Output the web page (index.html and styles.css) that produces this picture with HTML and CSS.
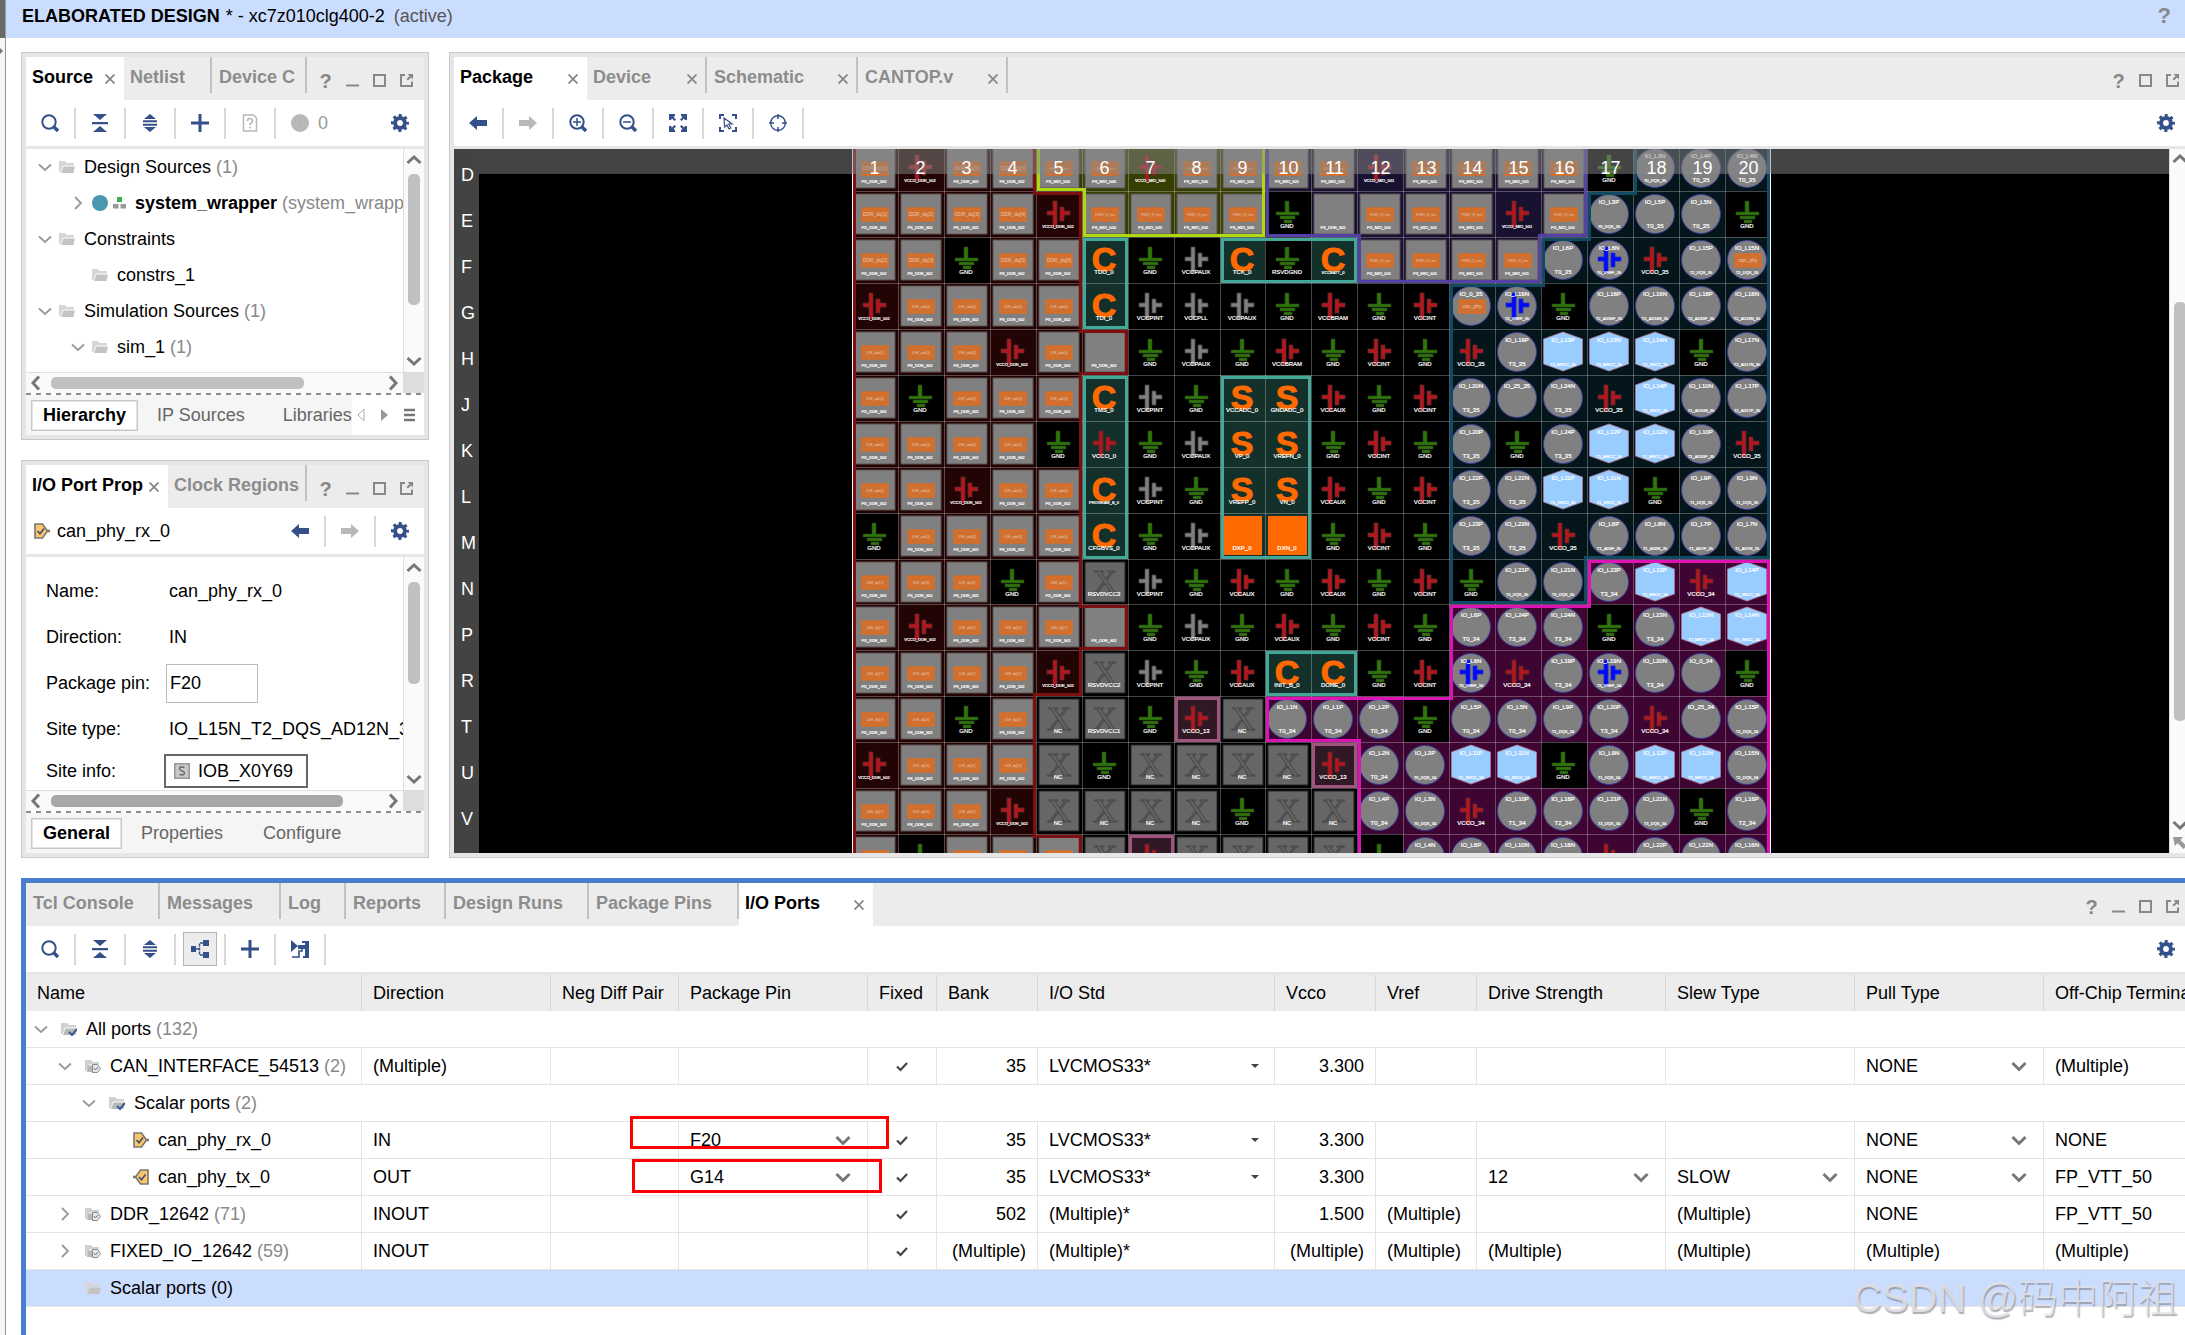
FILE: index.html
```html
<!DOCTYPE html>
<html lang="en">
<head>
<meta charset="utf-8">
<title>Elaborated Design</title>
<link rel="stylesheet" href="styles.css">
</head>
<body>
<svg class="defs" aria-hidden="true">
  <symbol id="search" viewBox="0 0 18 18"><circle cx="8" cy="8" r="6.7" fill="none" stroke="currentColor" stroke-width="2"/><path d="M13 13l4 4" stroke="currentColor" stroke-width="3.4"/></symbol>
  <symbol id="collapse" viewBox="0 0 18 18"><path d="M2 0h14L9 6zM2 18h14l-7-6zM1 8h16v2.2H1z" fill="currentColor"/></symbol>
  <symbol id="expand" viewBox="0 0 18 18"><path d="M3 5h12L9 0zM3 13h12l-6 5zM2 6.2h14v2H2zM2 9.8h14v2H2z" fill="currentColor"/></symbol>
  <symbol id="plus" viewBox="0 0 18 18"><path d="M9 0v18M0 9h18" stroke="currentColor" stroke-width="3"/></symbol>
  <symbol id="doc" viewBox="0 0 18 18"><path d="M2.500 1h10l3 3v13h-13z" fill="none" stroke="currentColor" stroke-width="1.500"/><path d="M6.500 7q0-2.500 2.500-2.500t2.500 2.300q0 1.500-1.500 2.400-1 .6-1 1.800M9 12.500v2" fill="none" stroke="currentColor" stroke-width="1.700"/></symbol>
  <symbol id="alert" viewBox="0 0 18 18"><circle cx="9" cy="9" r="9" fill="currentColor"/><path d="M9 4v7M9 12.500v2" stroke="#b4b4b4" stroke-width="2"/></symbol>
  <symbol id="gear" viewBox="0 0 18 18"><circle cx="9" cy="9" r="4.900" fill="none" stroke="currentColor" stroke-width="4"/><circle cx="9" cy="9" r="7.600" fill="none" stroke="currentColor" stroke-width="2.800" stroke-dasharray="3 2.969" stroke-dashoffset="1.500"/></symbol>
  <symbol id="left" viewBox="0 0 18 14"><path d="M0 7l8-7v4h10v6H8v4z" fill="currentColor"/></symbol>
  <symbol id="right" viewBox="0 0 18 14"><path d="M18 7l-8-7v4H0v6h10v4z" fill="currentColor"/></symbol>
  <symbol id="zoomin" viewBox="0 0 18 18"><circle cx="8" cy="8" r="6.700" fill="none" stroke="currentColor" stroke-width="2"/><path d="M13 13l4 4" stroke="currentColor" stroke-width="3.400"/><path d="M8 4v8M4 8h8" stroke="currentColor" stroke-width="1.500"/></symbol>
  <symbol id="zoomout" viewBox="0 0 18 18"><circle cx="8" cy="8" r="6.700" fill="none" stroke="currentColor" stroke-width="2"/><path d="M13 13l4 4" stroke="currentColor" stroke-width="3.400"/><path d="M4 8h8" stroke="currentColor" stroke-width="1.500"/></symbol>
  <symbol id="fit" viewBox="0 0 18 18"><path d="M0 0h6v2L4.500 3 7 5.500 5.500 7 3 4.500 2 6H0zM18 0v6h-2l-1-1.500L12.500 7 11 5.500 13.500 3 12 2V0zM0 18v-6h2l1 1.500L5.500 11 7 12.500 4.500 15 6 16v2zM18 18h-6v-2l1.500-1L11 12.500l1.500-1.500 2.500 2.500 1-1.500h2z" fill="currentColor"/></symbol>
  <symbol id="area" viewBox="0 0 18 18"><path d="M1 5V1h4M13 1h4v4M17 13v4h-4M5 17H1v-4" fill="none" stroke="currentColor" stroke-width="2"/><path d="M5 4l8 6H9.800l2 4-1.800 1-2-4L5.600 13z" fill="none" stroke="currentColor" stroke-width="1.200"/></symbol>
  <symbol id="target" viewBox="0 0 18 18"><circle cx="9" cy="9" r="7.300" fill="none" stroke="currentColor" stroke-width="1.400"/><path d="M9 0v5M9 13v5M0 9h5M13 9h5" stroke="currentColor" stroke-width="1.500"/></symbol>
  <symbol id="tree" viewBox="0 0 18 18"><path d="M0 6h5v6H0zM12 0h6v6h-6zM12 12h6v6h-6z" fill="currentColor"/><path d="M5 9h4M12 3H8.500v12H12" fill="none" stroke="currentColor" stroke-width="1.400" stroke-dasharray="3 1"/></symbol>
  <symbol id="place" viewBox="0 0 18 18"><path d="M0 0l7 6-7 6zM7 5h7v4H7zM14 1h4v17h-4zM11 1h3v2h-3zM12 16h2v2h-2z" fill="currentColor"/><path d="M1 17h7v-6h3V8" fill="none" stroke="currentColor" stroke-width="1.600"/></symbol>
  <symbol id="maximize" viewBox="0 0 13 13"><path d="M1 1h11v11H1z" fill="none" stroke="currentColor" stroke-width="2"/></symbol>
  <symbol id="float" viewBox="0 0 13 13"><path d="M5 1H1v11h11V7.500" fill="none" stroke="currentColor" stroke-width="2"/><path d="M7.500 0H13v5.500l-2-2-3 3L6.500 5l3-3z" fill="currentColor"/></symbol>
  <symbol id="minimize" viewBox="0 0 13 13"><path d="M0 11.500h13" stroke="currentColor" stroke-width="2"/></symbol>
  <symbol id="x" viewBox="0 0 10 10"><path d="M0.500 0.500l9 9M9.500 0.500l-9 9" stroke="currentColor" stroke-width="1.800"/></symbol>
  <symbol id="down" viewBox="0 0 14 14"><path d="M1 4.500L7 10l6-5.500" fill="none" stroke="currentColor" stroke-width="1.800"/></symbol>
  <symbol id="next" viewBox="0 0 14 14"><path d="M4 1l6 6-6 6" fill="none" stroke="currentColor" stroke-width="1.800"/></symbol>
  <symbol id="bold-down" viewBox="0 0 16 16"><path d="M1.500 5l6.500 6 6.500-6" fill="none" stroke="currentColor" stroke-width="3"/></symbol>
  <symbol id="bold-up" viewBox="0 0 16 16"><path d="M1.500 11L8 5l6.500 6" fill="none" stroke="currentColor" stroke-width="3"/></symbol>
  <symbol id="bold-left" viewBox="0 0 16 16"><path d="M11 1.500L5 8l6 6.500" fill="none" stroke="currentColor" stroke-width="3"/></symbol>
  <symbol id="bold-right" viewBox="0 0 16 16"><path d="M5 1.500L11 8l-6 6.500" fill="none" stroke="currentColor" stroke-width="3"/></symbol>
  <symbol id="folder" viewBox="0 0 16 16"><path d="M0 13V2h6l1.500 2H15v2.500H4L1.500 13z" fill="#d6d6d6"/><path d="M4.500 7.500H16L14.500 14H2z" fill="#c4c4c4"/></symbol>
  <symbol id="folder-check" viewBox="0 0 16 16"><path d="M0 13V2h6l1.500 2H15v2.500H4L1.500 13z" fill="#d0d0d0"/><path d="M4.500 7.500H16L14.500 14H2z" fill="#b8b8b8"/><path d="M8 11l3 3 5-6" fill="none" stroke="#3b5b92" stroke-width="2"/></symbol>
  <symbol id="folder-port" viewBox="0 0 16 16"><path d="M0 13V2h6l1.500 2H14v2.500H4L1.500 13z" fill="#d0d0d0"/><path d="M3 7.500h5V14H2z" fill="#b8b8b8"/><path d="M7.500 6.500h5l3 4-3 4h-5z" fill="#e8e8e8" stroke="#8a8a8a"/><path d="M9 10l1.500 2 2.500-3" fill="none" stroke="#5a76a6"/></symbol>
  <symbol id="port-in" viewBox="0 0 16 16"><path d="M1 1h7.500l5 7-5 7H1z" fill="#fdc468" stroke="#777" stroke-width="1.600"/><path d="M13 8h3" stroke="#777" stroke-width="2.500"/><path d="M3.500 8l2.500 2.800L10 5.500" fill="none" stroke="#3b4f7a" stroke-width="1.600"/></symbol>
  <symbol id="port-out" viewBox="0 0 16 16"><path d="M15 1H7.500l-5 7 5 7H15z" fill="#fdc468" stroke="#777" stroke-width="1.600"/><path d="M3 8H0" stroke="#777" stroke-width="2.500"/><path d="M6 8l2.500 2.800L12.500 5.500" fill="none" stroke="#3b4f7a" stroke-width="1.600"/></symbol>
  <symbol id="module" viewBox="0 0 16 16"><circle cx="8" cy="8" r="8" fill="#4a97b0"/></symbol>
  <symbol id="hier" viewBox="0 0 13 12"><path d="M4 0h5v5H4z" fill="#33b050"/><path d="M0 7h5.500v4.500H0zM7.500 7H13v4.500H7.500z" fill="#999"/></symbol>
  <symbol id="site" viewBox="0 0 16 16"><path d="M.8.8h14.400v14.400H.8z" fill="#c8c8c8" stroke="#999" stroke-width="1.600"/><path d="M10.500 4.500q-5-1.500-5 1.200 0 1.300 2.500 2.200t2.500 2.200q0 2.600-5 1.400" fill="none" stroke="#666" stroke-width="1.400"/></symbol>
  <symbol id="nw" viewBox="0 0 16 16"><path d="M1 2h10L8.500 5l6 6-3 3-6-6L3 11z" fill="currentColor"/></symbol>
</svg>

<div class="app">
  <div class="edge"><div class="edge-top"></div><svg class="edge-mark" viewBox="0 0 3 6"><path d="M0 0l3 3-3 3z" fill="#777"/></svg></div>
  <div class="main">
    <header class="title"><b>ELABORATED DESIGN</b><span>* - xc7z010clg400-2</span><span class="active">(active)</span><button class="help" aria-label="Help">?</button></header>

    <div class="workspace">
      <div class="side">
        <section class="panel">
          <div class="tabs tabs-sources">
            <button class="tab on">Source<svg class="close"><use href="#x"/></svg></button>
            <button class="tab">Netlist</button>
            <button class="tab">Device C</button>
            <div class="win"><button>?</button><button aria-label="Minimize"><svg><use href="#minimize"/></svg></button><button aria-label="Maximize"><svg><use href="#maximize"/></svg></button><button aria-label="Float"><svg><use href="#float"/></svg></button></div>
          </div>
          <div class="toolbar">
            <button aria-label="Search"><svg><use href="#search"/></svg></button>
            <button aria-label="Collapse all"><svg><use href="#collapse"/></svg></button>
            <button aria-label="Expand all"><svg><use href="#expand"/></svg></button>
            <button aria-label="Add"><svg><use href="#plus"/></svg></button>
            <button class="off" aria-label="Missing sources"><svg><use href="#doc"/></svg></button>
            <button class="off last" aria-label="Messages"><svg><use href="#alert"/></svg></button><span class="count">0</span>
            <button class="gear" aria-label="Settings"><svg><use href="#gear"/></svg></button>
          </div>
          <div class="scroller">
            <ul class="tree">
              <li><svg class="chev"><use href="#down"/></svg><svg class="ico"><use href="#folder"/></svg>Design Sources <i>(1)</i></li>
              <li class="in"><svg class="chev"><use href="#next"/></svg><svg class="ico module"><use href="#module"/></svg><svg class="hier"><use href="#hier"/></svg><b>system_wrapper</b><i>(system_wrapper.v)</i></li>
              <li><svg class="chev"><use href="#down"/></svg><svg class="ico"><use href="#folder"/></svg>Constraints</li>
              <li class="in"><span class="chev"></span><svg class="ico"><use href="#folder"/></svg>constrs_1</li>
              <li><svg class="chev"><use href="#down"/></svg><svg class="ico"><use href="#folder"/></svg>Simulation Sources <i>(1)</i></li>
              <li class="in"><svg class="chev"><use href="#down"/></svg><svg class="ico"><use href="#folder"/></svg>sim_1 <i>(1)</i></li>
            </ul>
            <div class="vbar"><svg><use href="#bold-up"/></svg><div class="track"><div class="thumb thumb-src-v"></div></div><svg><use href="#bold-down"/></svg></div>
            <div class="hbar"><svg><use href="#bold-left"/></svg><div class="track"><div class="thumb thumb-src-h"></div></div><svg><use href="#bold-right"/></svg></div>
            <div class="corner"></div>
          </div>
          <div class="views">
            <button class="view on">Hierarchy</button><button class="view">IP Sources</button><button class="view view-cut">Libraries</button>
            <div class="pager"><svg viewBox="0 0 72 18"><path d="M12 3L6 9l6 6z" fill="none" stroke="#aaa"/><path d="M29 3l7 6-7 6z" fill="#999"/><path d="M52 4h11M52 9h11M52 14h11" stroke="#777" stroke-width="2.500"/></svg></div>
          </div>
        </section>

        <section class="panel">
          <div class="tabs tabs-props">
            <button class="tab on">I/O Port Prop<svg class="close"><use href="#x"/></svg></button>
            <button class="tab">Clock Regions</button>
            <div class="win"><button>?</button><button aria-label="Minimize"><svg><use href="#minimize"/></svg></button><button aria-label="Maximize"><svg><use href="#maximize"/></svg></button><button aria-label="Float"><svg><use href="#float"/></svg></button></div>
          </div>
          <div class="toolbar">
            <div class="subject"><svg class="ico"><use href="#port-in"/></svg>can_phy_rx_0</div>
            <button aria-label="Back"><svg class="arrow"><use href="#left"/></svg></button>
            <button class="off" aria-label="Forward"><svg class="arrow"><use href="#right"/></svg></button>
            <button class="gear" aria-label="Settings"><svg><use href="#gear"/></svg></button>
          </div>
          <div class="scroller">
            <div class="form">
              <span>Name:</span><span class="val">can_phy_rx_0</span>
              <span>Direction:</span><span class="val">IN</span>
              <label for="pin">Package pin:</label><input id="pin" value="F20">
              <span>Site type:</span><span class="val">IO_L15N_T2_DQS_AD12N_35</span>
              <span>Site info:</span><button class="site"><svg class="ico"><use href="#site"/></svg>IOB_X0Y69</button>
            </div>
            <div class="vbar"><svg><use href="#bold-up"/></svg><div class="track"><div class="thumb thumb-prop-v"></div></div><svg><use href="#bold-down"/></svg></div>
            <div class="hbar"><svg><use href="#bold-left"/></svg><div class="track"><div class="thumb thumb-prop-h"></div></div><svg><use href="#bold-right"/></svg></div>
            <div class="corner"></div>
          </div>
          <div class="views"><button class="view on">General</button><button class="view">Properties</button><button class="view">Configure</button></div>
        </section>
      </div>

      <section class="panel package">
        <div class="tabs tabs-package">
          <button class="tab on">Package<svg class="close"><use href="#x"/></svg></button>
          <button class="tab">Device<svg class="close"><use href="#x"/></svg></button>
          <button class="tab">Schematic<svg class="close"><use href="#x"/></svg></button>
          <button class="tab">CANTOP.v<svg class="close"><use href="#x"/></svg></button>
          <div class="win"><button>?</button><button aria-label="Maximize"><svg><use href="#maximize"/></svg></button><button aria-label="Float"><svg><use href="#float"/></svg></button></div>
        </div>
        <div class="toolbar">
          <button aria-label="Back"><svg class="arrow"><use href="#left"/></svg></button>
          <button class="off" aria-label="Forward"><svg class="arrow"><use href="#right"/></svg></button>
          <button aria-label="Zoom in"><svg><use href="#zoomin"/></svg></button>
          <button aria-label="Zoom out"><svg><use href="#zoomout"/></svg></button>
          <button aria-label="Zoom fit"><svg><use href="#fit"/></svg></button>
          <button aria-label="Zoom to selection"><svg><use href="#area"/></svg></button>
          <button aria-label="Auto fit"><svg><use href="#target"/></svg></button>
          <button class="gear" aria-label="Settings"><svg><use href="#gear"/></svg></button>
        </div>
        <div class="viewer">
          <div class="canvas">
            <svg id="pins" viewBox="0 0 919 704"></svg>
            <div class="cols" id="cols"></div>
            <div class="rows" id="rows"></div>
          </div>
          <div class="vbar vbar-wide"><svg><use href="#bold-up"/></svg><div class="track"><div class="thumb thumb-pkg"></div></div><svg><use href="#bold-down"/></svg><svg class="nw"><use href="#nw"/></svg></div>
        </div>
      </section>
    </div>

    <section class="ports">
      <div class="tabs tabs-ports">
        <button class="tab">Tcl Console</button><button class="tab">Messages</button><button class="tab">Log</button><button class="tab">Reports</button><button class="tab">Design Runs</button><button class="tab">Package Pins</button>
        <button class="tab on">I/O Ports<svg class="close"><use href="#x"/></svg></button>
        <div class="win"><button>?</button><button aria-label="Minimize"><svg><use href="#minimize"/></svg></button><button aria-label="Maximize"><svg><use href="#maximize"/></svg></button><button aria-label="Float"><svg><use href="#float"/></svg></button></div>
      </div>
      <div class="toolbar">
        <button aria-label="Search"><svg><use href="#search"/></svg></button>
        <button aria-label="Collapse all"><svg><use href="#collapse"/></svg></button>
        <button aria-label="Expand all"><svg><use href="#expand"/></svg></button>
        <button aria-label="Group by interface" aria-pressed="true"><span class="pressed"><svg><use href="#tree"/></svg></span></button>
        <button aria-label="Create port"><svg><use href="#plus"/></svg></button>
        <button aria-label="Place ports"><svg><use href="#place"/></svg></button>
        <button class="gear" aria-label="Settings"><svg><use href="#gear"/></svg></button>
      </div>
      <table>
        <colgroup><col class="w336"><col class="w189"><col class="w128"><col class="w189"><col class="w69"><col class="w101"><col class="w237"><col class="w101"><col class="w101"><col class="w189"><col class="w189"><col class="w189"><col></colgroup>
        <thead><tr><th>Name</th><th>Direction</th><th>Neg Diff Pair</th><th>Package Pin</th><th>Fixed</th><th>Bank</th><th>I/O Std</th><th>Vcco</th><th>Vref</th><th>Drive Strength</th><th>Slew Type</th><th>Pull Type</th><th>Off-Chip Termination</th></tr></thead>
        <tbody>
          <tr><td colspan="13"><div class="node"><svg class="chev"><use href="#down"/></svg><svg class="ico"><use href="#folder-check"/></svg>All ports <i>(132)</i></div></td></tr>
          <tr><td><div class="node l1"><svg class="chev"><use href="#down"/></svg><svg class="ico"><use href="#folder-port"/></svg>CAN_INTERFACE_54513 <i>(2)</i></div></td><td>(Multiple)</td><td></td><td></td><td class="tick"><input type="checkbox" checked aria-label="Fixed"></td><td class="num">35</td><td><select class="small" aria-label="I/O Std"><option>LVCMOS33*</option></select></td><td class="num">3.300</td><td></td><td></td><td></td><td><select aria-label="Pull Type"><option>NONE</option></select></td><td>(Multiple)</td></tr>
          <tr><td colspan="13"><div class="node l2"><svg class="chev"><use href="#down"/></svg><svg class="ico"><use href="#folder-check"/></svg>Scalar ports <i>(2)</i></div></td></tr>
          <tr><td><div class="node l3"><span class="chev"></span><svg class="ico"><use href="#port-in"/></svg>can_phy_rx_0</div></td><td>IN</td><td></td><td class="marked"><select aria-label="Package Pin"><option>F20</option></select><div class="mark mark-rx"></div></td><td class="tick"><input type="checkbox" checked aria-label="Fixed"></td><td class="num">35</td><td><select class="small" aria-label="I/O Std"><option>LVCMOS33*</option></select></td><td class="num">3.300</td><td></td><td></td><td></td><td><select aria-label="Pull Type"><option>NONE</option></select></td><td>NONE</td></tr>
          <tr><td><div class="node l3"><span class="chev"></span><svg class="ico"><use href="#port-out"/></svg>can_phy_tx_0</div></td><td>OUT</td><td></td><td class="marked"><select aria-label="Package Pin"><option>G14</option></select><div class="mark mark-tx"></div></td><td class="tick"><input type="checkbox" checked aria-label="Fixed"></td><td class="num">35</td><td><select class="small" aria-label="I/O Std"><option>LVCMOS33*</option></select></td><td class="num">3.300</td><td></td><td><select aria-label="Drive Strength"><option>12</option></select></td><td><select aria-label="Slew Type"><option>SLOW</option></select></td><td><select aria-label="Pull Type"><option>NONE</option></select></td><td>FP_VTT_50</td></tr>
          <tr><td><div class="node l1"><svg class="chev"><use href="#next"/></svg><svg class="ico"><use href="#folder-port"/></svg>DDR_12642 <i>(71)</i></div></td><td>INOUT</td><td></td><td></td><td class="tick"><input type="checkbox" checked aria-label="Fixed"></td><td class="num">502</td><td>(Multiple)*</td><td class="num">1.500</td><td>(Multiple)</td><td></td><td>(Multiple)</td><td>NONE</td><td>FP_VTT_50</td></tr>
          <tr><td><div class="node l1"><svg class="chev"><use href="#next"/></svg><svg class="ico"><use href="#folder-port"/></svg>FIXED_IO_12642 <i>(59)</i></div></td><td>INOUT</td><td></td><td></td><td class="tick"><input type="checkbox" checked aria-label="Fixed"></td><td class="num">(Multiple)</td><td>(Multiple)*</td><td class="num">(Multiple)</td><td>(Multiple)</td><td>(Multiple)</td><td>(Multiple)</td><td>(Multiple)</td><td>(Multiple)</td></tr>
          <tr class="selected"><td colspan="13"><div class="node l1"><span class="chev"></span><svg class="ico"><use href="#folder"/></svg>Scalar ports (0)</div></td></tr>
        </tbody>
      </table>
    </section>
  </div>
</div>
<div class="watermark">CSDN @码中阿祖</div>
<script src="pins.js"></script>
</body>
</html>
```
FILE: styles.css
```css
* { box-sizing: border-box; }
html, body { height: 100%; }
body { margin: 0; overflow: hidden; background: #fff; color: #000; font: 18px/24px "Liberation Sans", Arial, sans-serif; position: relative; }
button, input, select { font: inherit; color: inherit; border: 0; background: none; padding: 0; margin: 0; }
.defs { display: none; }
i { font-style: normal; color: #888; }

.app { display: flex; min-height: 100%; }
.edge { flex: none; width: 6px; border-right: 1px solid #999; background: #f6f6f6; }
.edge-top { height: 38px; background: #6a6a6a; }
.edge-mark { display: block; width: 3px; height: 6px; margin-top: 10px; }
.main { flex: 1; min-width: 0; display: flex; flex-direction: column; }
.title { display: flex; align-items: center; height: 38px; padding: 0 14px 6px 16px; background: #cbddff; white-space: pre; }
.title span { margin-left: 6px; }
.title .active { margin-left: 9px; color: #555; }
.help { margin-left: auto; font-weight: bold; font-size: 22px; color: #888; }

.workspace { display: flex; gap: 20px; padding: 14px 0 20px 15px; margin-right: -10px; }
.side { flex: none; width: 408px; display: flex; flex-direction: column; gap: 20px; }
.panel { border: 1px solid #c8c8c8; padding: 4px; background: #e6e6e6; background-clip: padding-box; }
.package { flex: 1; min-width: 0; display: flex; flex-direction: column; }

.tabs { display: grid; height: 43px; background: #ececec; }
.tabs-sources { grid-template-columns: 98px 88px 95px 1fr; }
.tabs-props { grid-template-columns: 142px 139px 1fr; }
.tabs-package { grid-template-columns: 133px 120px 151px 150px 1fr; }
.tabs-ports { grid-template-columns: 134px 121px 65px 100px 143px 150px 134px 1fr; }
.tab { display: flex; align-items: center; justify-content: space-between; height: 36px; margin-bottom: 7px; padding: 3px 8px 0 7px; border-right: 2px solid #c2c2c2; color: #8c8c8c; font-weight: bold; white-space: nowrap; overflow: hidden; }
.tab.on { height: 43px; margin: 0; padding: 0 9px 4px 6px; background: #fff; color: #000; border: 0; }
.tabs .tab.on + .tab { padding-left: 6px; }
.close { width: 10px; height: 10px; margin-top: 5px; color: #888; flex: none; }
.win { display: flex; align-items: center; justify-content: flex-end; padding: 4px 4px 0 0; color: #888; }
.win button { width: 27px; height: 27px; display: grid; place-items: center; font-weight: bold; font-size: 20px; }
.win svg { width: 13px; height: 13px; }

.toolbar { display: flex; align-items: center; height: 49px; background: #fff; border-bottom: 3px solid #e6e6e6; color: #335089; }
.toolbar button { width: 50px; height: 31px; border-right: 2px solid #d8d8d8; display: grid; place-items: center; }
.toolbar svg { width: 18px; height: 18px; }
.toolbar .arrow { width: 18px; height: 14px; }
.toolbar .off { color: #b8b8b8; }
.toolbar .last { border-color: transparent; }
.toolbar .gear { margin-left: auto; border: 0; width: 48px; }
.count { color: #999; margin-left: -8px; }
.pressed { display: grid; place-items: center; width: 34px; height: 34px; border: 1px solid #b4b4b4; background: #ececec; margin: -2px 0; }
.subject { flex: 1; display: flex; align-items: center; gap: 7px; padding-left: 8px; color: #000; }
.subject .ico { width: 16px; height: 16px; }

.scroller { display: grid; grid-template-columns: minmax(0, 1fr) 21px; border-bottom: 2px solid transparent; background: repeating-linear-gradient(90deg, #8c8c8c 0 5px, #fff 5px 10px) 0 100% / 100% 2px no-repeat border-box, #fff; }
.vbar { display: flex; flex-direction: column; align-items: center; background: #fafafa; border-left: 1px solid #ddd; color: #777; padding: 3px 0; }
.vbar svg, .hbar svg { width: 16px; height: 16px; flex: none; }
.hbar { display: flex; align-items: center; height: 21px; background: #fafafa; border-top: 1px solid #e0e0e0; padding: 0 2px; color: #777; }
.track { flex: 1; }
.vbar .track { padding: 6px 0; width: 12px; }
.hbar .track { padding: 0 7px; }
.thumb { background: #c0c0c0; border-radius: 5px; }
.thumb-src-v { height: 131px; }
.thumb-src-h { height: 12px; width: 253px; }
.thumb-prop-v { height: 102px; }
.thumb-prop-h { height: 12px; width: 292px; background: #a8a8a8; }
.corner { background: #ddd; }

.tree { list-style: none; margin: 0; padding: 0 0 7px 7px; overflow: hidden; }
.tree li { display: flex; align-items: center; height: 36px; white-space: pre; }
.tree .in { padding-left: 33px; }
.tree b + i { margin-left: 5px; }
.chev { flex: none; width: 24px; height: 14px; color: #999; }
.ico { flex: none; width: 16px; height: 16px; }
.tree .ico { margin: 0 9px 0 2px; }
.tree .module { margin-right: 5px; }
.hier { width: 13px; height: 12px; margin-right: 9px; flex: none; }

.views { display: flex; align-items: center; height: 40px; background: #f5f5f5; padding-left: 5px; color: #666; }
.view { height: 31px; padding: 0 10px; margin-right: 20px; }
.view.on { background: #fff; border: 1px solid #c8c8c8; box-shadow: inset 0 0 0 1px #e4e4e4; color: #000; font-weight: bold; padding: 0 11px; margin-right: 9px; }
.views .view-cut { padding: 0 0 0 8px; margin: 0; }
.pager { flex: 1; align-self: stretch; background: #fff; display: flex; align-items: center; overflow: hidden; }
.pager svg { width: 72px; height: 18px; flex: none; }

.form { display: grid; grid-template-columns: 118px 1fr; grid-template-rows: repeat(4, 46px) 38px; align-items: center; padding: 11px 0 0 20px; white-space: nowrap; overflow: hidden; }
.val { padding-left: 5px; }
.form input { width: 92px; height: 39px; margin-left: 2px; padding-left: 3px; border: 1px solid #bbb; }
.form .site { width: 144px; height: 34px; border: 2px solid #666; display: flex; align-items: center; gap: 8px; padding-left: 8px; }

.viewer { display: grid; grid-template-columns: minmax(0, 1fr) 21px; }
.canvas { display: grid; background: #000; color: #fff; height: 704px; overflow: hidden; }
.canvas > * { grid-area: 1 / 1; }
#pins { width: 919px; height: 704px; justify-self: center; }
.cols { display: grid; grid-template-columns: repeat(20, 46px); justify-content: center; height: 25px; background: rgba(135, 135, 135, .5); text-align: center; line-height: 38px; }
.rows { width: 25px; background: #434343; padding-top: 3px; justify-self: start; overflow: hidden; }
.rows div { height: 46px; line-height: 46px; padding-left: 7px; }
.vbar-wide { padding: 2px 1px; margin-right: 1px; }
.vbar-wide .track { padding-top: 135px; }
.thumb-pkg { height: 419px; }
.nw { color: #999; margin-top: 2px; }

#pins text { text-anchor: middle; font-size: 6px; fill: #fff; stroke: #fff; stroke-width: .2; }
#pins .long { font-size: 4px; }
#pins .inner { fill-opacity: .6; font-size: 5px; stroke: none; }
#pins .tiny { fill-opacity: .6; font-size: 3px; stroke: none; }
#pins .letter { font-size: 34px; font-weight: bold; fill: #ff6a00; stroke: #ff6a00; stroke-width: 1px; }
#pins .nc { font: 34px "Liberation Serif", serif; fill: none; stroke: #484848; stroke-width: 1px; }

.ports { flex: 1; margin: 0 -10px 0 15px; border: 5px solid #4a7dcc; border-bottom: 0; background: #fff; }
table { width: 100%; table-layout: fixed; border-spacing: 0; }
.w336 { width: 336px; } .w237 { width: 237px; } .w189 { width: 189px; } .w128 { width: 128px; } .w101 { width: 101px; } .w69 { width: 69px; }
th { height: 36px; background: #ececec; font-weight: normal; text-align: left; padding: 0 0 0 11px; border-right: 1px solid #d8d8d8; white-space: nowrap; overflow: hidden; }
td { height: 37px; padding: 0 0 0 11px; border-right: 1px solid #e4e4e4; border-bottom: 1px solid #e4e4e4; white-space: nowrap; }
td.num { text-align: right; padding: 0 11px 0 0; }
td.tick { text-align: center; padding: 0; }
.tick input { appearance: none; display: block; margin: 0 auto; width: 16px; height: 16px; background: url("data:image/svg+xml,%3Csvg xmlns='http://www.w3.org/2000/svg' viewBox='0 0 16 16'%3E%3Cpath d='M3 8.500l3.500 3.500L13 5' fill='none' stroke='%23444' stroke-width='2.200'/%3E%3C/svg%3E"); }
.node { display: flex; align-items: center; white-space: pre; margin-left: -8px; }
.node .ico { margin: 0 9px 0 8px; }
.l1 { padding-left: 24px; } .l2 { padding-left: 48px; } .l3 { padding-left: 72px; }
select { appearance: none; display: block; width: 100%; height: 36px; background: url("data:image/svg+xml,%3Csvg xmlns='http://www.w3.org/2000/svg' viewBox='0 0 16 16'%3E%3Cpath d='M1.500 5L8 11.500 14.500 5' fill='none' stroke='%23777' stroke-width='3'/%3E%3C/svg%3E") right 16px center / 16px 16px no-repeat; }
select.small { background: url("data:image/svg+xml,%3Csvg xmlns='http://www.w3.org/2000/svg' viewBox='0 0 8 6'%3E%3Cpath d='M0 1h8L4 5z' fill='%23444'/%3E%3C/svg%3E") right 15px center / 8px 6px no-repeat; }
.selected td { background: #cbddff; }
.marked { position: relative; }
.mark { position: absolute; border: 3px solid #f00; pointer-events: none; }
.mark-rx { left: -49px; top: -6px; width: 259px; height: 33px; }
.mark-tx { left: -47px; top: 0; width: 250px; height: 34px; }
.watermark { position: absolute; right: 7px; bottom: 11px; font: 40px/52px "Liberation Sans", "Noto Sans CJK SC", sans-serif; font-weight: 300; color: rgba(225, 225, 230, .85); text-shadow: 1px 2px 1px rgba(120, 120, 130, .6); white-space: nowrap; pointer-events: none; }
```
FILE: pins.js
```js
// Ball map of the clg400 package, rows D to W, columns 1 to 20.
// b bank pin, v supply, g ground, a PS supply, c config, s XADC, o diode,
// x not connected, q free pin, i I/O, h clock I/O, j VREF I/O, k assigned I/O
const names = 'DEFGHJKLMNPRTUVW';
const kinds = [
  'bvbbbbvbbbbvbbbbgiii', 'bbbbvbbbbgqbbbvbiiig', 'bbgbbcgacgcbbbbijvik',
  'vbbbbcaaagvgvkjgiiii', 'bbbvbqgagvgvgvihhhgi', 'bgbbbcagssvgviiivhii',
  'bbbbgvgassgvgigihhiv', 'bbvbbcagssvgviihhgii', 'gbbbbcgaoogvgiiviiii',
  'bbbgbxagvgvgvgiiihvh', 'bvbbbqgagvgvgiiigihh', 'bbbbvxagvccgvjvijiig',
  'bbgbxxgvxiiigiiiivii', 'vbbbxgxxxxviihhgihhi', 'bbbvxxxxgxxiiviiiigi',
  'bgbbbxvxxxxgiiiiviii'];
const banks = [
  'rrrryyyyyppppppp.nnn', 'rrrrryyyypppppppnnnn', 'rrrrrt..tttppppnnnnn',
  'rrrrrt.......nnnnnnn', 'rrrrrr.......nnnnnnn', 'rrrrrt..tt...nnnnnnn',
  'rrrrrt..tt...nnnnnnn', 'rrrrrt..tt...nnnnnnn', 'rrrrrt..tt...nnnnnnn',
  'rrrrr........nnnmmmm', 'rrrrrr.......mmmmmmm', 'rrrrr....tt..mmmmmmm',
  'rrrr...k.mmmmmmmmmmm', 'rrrr......kmmmmmmmmm', 'rrrr.......mmmmmmmmm',
  'rrrrr.k....mmmmmmmmm'];
const ios = {
  D: '18:L3N 19:L4P 20:L4N', E: '17:L3P 18:L5P 19:L5N', F: '16:L6P 17:L6N 19:L15P 20:L15N',
  G: '14:0_35 15:L19N 17:L16P 18:L16N 19:L18P 20:L18N', H: '15:L19P 16:L13P 17:L13N 18:L14N 20:L17N',
  J: '14:L20N 15:25_35 16:L24N 18:L14P 19:L10N 20:L17P', K: '14:L20P 16:L24P 17:L12P 18:L12N 19:L10P',
  L: '14:L22P 15:L22N 16:L11P 17:L11N 19:L9P 20:L9N', M: '14:L23P 15:L23N 17:L8P 18:L8N 19:L7P 20:L7N',
  N: '15:L21P 16:L21N 17:L23P 18:L13P 20:L14P', P: '14:L6P 15:L24P 16:L24N 18:L23N 19:L13N 20:L14N',
  R: '14:L6N 16:L19P 17:L19N 18:L20N 19:0_34', T: '10:L1N 11:L1P 12:L2P 14:L5P 15:L5N 16:L9P 17:L20P 19:25_34 20:L15P',
  U: '12:L2N 13:L3P 14:L11P 15:L11N 17:L9N 18:L12P 19:L12N 20:L15N', V: '12:L4P 13:L3N 15:L10P 16:L18P 17:L21P 18:L21N 20:L16P',
  W: '13:L4N 14:L8P 15:L10N 16:L18N 18:L22P 19:L22N 20:L16N'
};
const special = {
  F6: 'TDO_0', G6: 'TDI_0', J6: 'TMS_0', L6: 'PROGRAM_B_0', M6: 'CFGBVS_0', F9: 'TCK_0', F10: 'RSVDGND', F11: 'VCCBATT_0',
  R10: 'INIT_B_0', R11: 'DONE_0', J9: 'VCCADC_0', J10: 'GNDADC_0', K9: 'VP_0', K10: 'VREFN_0', L9: 'VREFP_0', L10: 'VN_0',
  M9: 'DXP_0', M10: 'DXN_0', N6: 'RSVDVCC3', R6: 'RSVDVCC2', T6: 'RSVDVCC1', G8: 'VCCPLL', G11: 'VCCBRAM', H10: 'VCCBRAM'
};
const supply = { r: 'VCCO_DDR_502', y: 'VCCO_MIO_500', p: 'VCCO_MIO_501', t: 'VCCO_0', n: 'VCCO_35', m: 'VCCO_34', k: 'VCCO_13' };
const fill = { r: '#220404', y: '#363e04', p: '#181130', t: '#14302b', n: '#04161c', m: '#3e0532', k: '#301824' };
const edge = { r: '#7d0f10', y: '#b0d810', p: '#5540a8', t: '#43a898', n: '#124a63', m: '#dc14b4', k: '#a0557f' };

const X = i => Math.round(0.4 + 45.9 * i);
const Y = j => Math.round(42.3 + 45.9 * (j - 1));
const rect = (x, y, w, h, f, more = '') => `<rect x="${x}" y="${y}" width="${w}" height="${h}" fill="${f}" ${more}/>`;
const label = (x, y, s, cls = '') => `<text x="${x}" y="${y}" class="${cls || (s.length > 8 ? 'long' : '')}">${s}</text>`;
const bank = (j, i) => banks[Math.min(15, Math.max(0, j))][i];

function ground(x, y) {
  return `<path d="M${x + 20} ${y + 10}h4v11h10v3H${x + 11}v-3h9zM${x + 15} ${y + 25}h15v3h-15zM${x + 19} ${y + 29}h8v3h-8z" fill="#2c7806" stroke="#303c20" stroke-width=".6"/>`;
}
function battery(x, y, f, s) {
  return `<path d="M${x + 17} ${y + 10}h4v26h-4V${y + 24}h-6v-4h6zM${x + 24} ${y + 16}h4v4h6v4h-6v6h-4z" fill="${f}" stroke="${s}" stroke-width=".8"/>`;
}
function port(x, y, s) {
  return rect(x + 10, y + 17, 26, 13, '#cf7030', 'stroke="#f0680f"') + label(x + 23, y + 25, s, s.length > 9 ? 'tiny' : 'inner');
}

function pin(j, i) {
  const x = X(i), y = Y(j), k = kinds[j][i], b = bank(j, i), name = names[j] + (i + 1);
  const square = (f, s) => rect(x + 3, y + 3, 40, 40, f, `stroke="${s}"`);
  let out = '', text = special[name];
  if (k === 'b') {
    const ddr = j < 3 ? 'DDR_dq[' + (i + j) + ']' : j < 9 ? 'DDR_addr[' + (i + 2) + ']' : 'DDR_dq[' + (i + 17) + ']';
    out = square('#808080', '#5c5050') + port(x, y, b === 'r' ? ddr : 'FIXED_IO_mio');
    text = b === 'r' ? 'PS_DDR_502' : 'PS_MIO_50' + (b === 'y' ? 0 : 1);
  } else if (k === 'q') { out = square('#808080', '#5c5050'); text = 'PS_DDR_502'; }
  else if (k === 'x') { out = square('#666', '#242424') + label(x + 23, y + 34, 'X', 'nc'); text = text || 'NC'; }
  else if (k === 'o') out = rect(x + 3, y + 3, 39, 39, '#ff6a00');
  else if (k === 'c' || k === 's') out = label(x + 22, y + 34, k.toUpperCase(), 'letter');
  else if (k === 'g') { out = ground(x, y); text = text || 'GND'; }
  else if (k === 'a') { out = battery(x, y, '#808080', '#444'); text = text || (i === 6 ? 'VCCPINT' : 'VCCPAUX'); }
  else if (k === 'v') { out = battery(x, y, '#b4161e', '#582828'); text = text || supply[b] || (i < 11 ? 'VCCAUX' : 'VCCINT'); }
  else {
    out = k === 'h'
      ? `<path d="M${x + 22} ${y + 3}l19.500 7v25l-19.500 7-19.500-7v-25z" fill="#9cf" stroke="#b07a90" stroke-width=".8"/>`
      : `<circle cx="${x + 22}" cy="${y + 23}" r="19.500" fill="#808080" stroke="#3a3a98"/>`;
    if (k === 'j') out += battery(x, y, '#0008ff', '#2030c0');
    if (k === 'k') out += port(x, y, 'can_phy');
    const io = (ios[names[j]].split(' ').find(s => s.startsWith(i + 1 + ':')) || ':').split(':')[1] || 'L19N';
    const n = parseInt(io.slice(1), 10), no = b === 'n' ? '35' : '34';
    out += label(x + 22, y + 13, 'IO_' + io);
    if (io[0] === 'L') {
      const extra = k === 'h' ? (n === 12 || n === 13 ? 'MRCC_' : 'SRCC_') : k === 'j' ? 'VREF_' : n % 6 === 3 ? 'DQS_' : b === 'n' && n > 6 && n < 19 ? 'AD' + n + io.slice(-1) + '_' : '';
      text = 'T' + Math.floor((n - 1) / 6) + '_' + extra + no;
    }
  }
  return out + (text ? label(x + 22, y + (k === 'b' || k === 'q' ? 38 : 37), text) : '');
}

let back = '', lines = '', edges = '', pins = '';
for (let j = 0; j < 16; j++) {
  for (let i = 0; i < 20; i++) {
    const b = bank(j, i), x = X(i), y = Y(j), w = X(i + 1) - x, h = Y(j + 1) - y;
    back += rect(x, y, w, h, b === '.' || kinds[j][i] === 'g' ? '#000' : fill[b]);
    pins += pin(j, i);
    if (b === '.') continue;
    const up = bank(j - 1, i) === b ? 4 : 0, dn = bank(j + 1, i) === b ? 4 : 0;
    const lf = i && bank(j, i - 1) === b ? 4 : 0, rt = i < 19 && bank(j, i + 1) === b ? 4 : 0;
    if (!up) edges += rect(x + 1 - lf, y + 1, w - 1 + lf + rt, 3, edge[b]);
    if (!dn) edges += rect(x + 1 - lf, y + h - 3, w - 1 + lf + rt, 3, edge[b]);
    if (!lf) edges += rect(x + 1, y + 1 - up, 3, h - 1 + up + dn, edge[b]);
    if (!rt) edges += rect(x + w - 3, y + 1 - up, 3, h - 1 + up + dn, edge[b]);
  }
}
for (let i = 1; i < 20; i++) lines += rect(X(i), 0, 1, 704, '#fff', 'fill-opacity=".27"');
for (let j = 1; j < 16; j++) lines += rect(1, Y(j), 917, 1, '#fff', 'fill-opacity=".27"');
document.getElementById('pins').innerHTML = back + lines + pins + edges + rect(0, 0, 1, 704, '#fff') + rect(918, 0, 1, 704, '#fff');
document.getElementById('cols').innerHTML = Array.from({ length: 20 }, (_, i) => `<span>${i + 1}</span>`).join('');
document.getElementById('rows').innerHTML = [...names.slice(0, 15)].map(n => `<div>${n}</div>`).join('');
```
